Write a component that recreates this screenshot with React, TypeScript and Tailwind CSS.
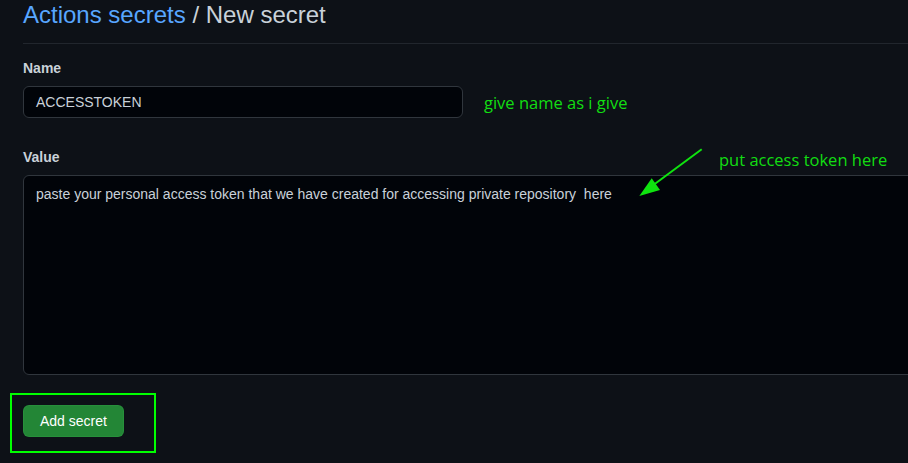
import React from "react";

export default function App() {
  return (
    <div
      className="relative w-[908px] h-[463px] overflow-hidden bg-[#0d1117] text-[#c9d1d9]"
      style={{ fontFamily: '"Liberation Sans", Arial, sans-serif' }}
    >
      <div className="pl-[23px]">
        <div className="border-b border-[#21262d] pb-[13px]">
          <h1 className="text-[24px] leading-[30px] font-normal">
            <span className="text-[#58a6ff]">Actions secrets</span>
            <span className="text-[#c9d1d9]"> / New secret</span>
          </h1>
        </div>

        <div className="mt-[14px]">
          <label className="block text-[14px] leading-[21px] font-bold text-[#c9d1d9]">Name</label>
          <div className="mt-[7px] w-[440px] h-[32px] rounded-[6px] border border-[#30363d] bg-[#010409] px-[12px] flex items-center text-[14px] text-[#c9d1d9]">
            ACCESSTOKEN
          </div>
        </div>

        <div className="mt-[29px]">
          <label className="block text-[14px] leading-[21px] font-bold text-[#c9d1d9]">Value</label>
          <div className="mt-[7px] w-[920px] h-[200px] rounded-[6px] border border-[#30363d] bg-[#010409] px-[12px] py-[8px] text-[14px] leading-[20px] text-[#c9d1d9]">
            paste your personal access token that we have created for accessing private repository&nbsp; here
          </div>
        </div>

        <div className="mt-[30px]">
          <button className="h-[32px] px-[16px] rounded-[6px] bg-[#238636] border border-[#2ea043]/40 text-white text-[14px] leading-[20px]">
            Add secret
          </button>
        </div>
      </div>

      {/* annotations */}
      <div
        className="absolute left-[484px] top-[91px] text-[16.5px] leading-[24px] text-[#12dd12]"
        style={{ fontFamily: '"Open Sans", sans-serif' }}
      >
        give name as i give
      </div>
      <div
        className="absolute left-[719px] top-[148px] text-[16.5px] leading-[24px] text-[#12dd12]"
        style={{ fontFamily: '"Open Sans", sans-serif' }}
      >
        put access token here
      </div>
      <svg className="absolute left-0 top-0 pointer-events-none" width="908" height="463">
        <line x1="701.7" y1="149.3" x2="652" y2="186" stroke="#0fe30f" strokeWidth="2" />
        <polygon points="639.3,196 651.7,178.3 660,190" fill="#0fe30f" />
        <rect x="11" y="394" width="144" height="58" fill="none" stroke="#00ff00" strokeWidth="2" />
      </svg>
    </div>
  );
}
